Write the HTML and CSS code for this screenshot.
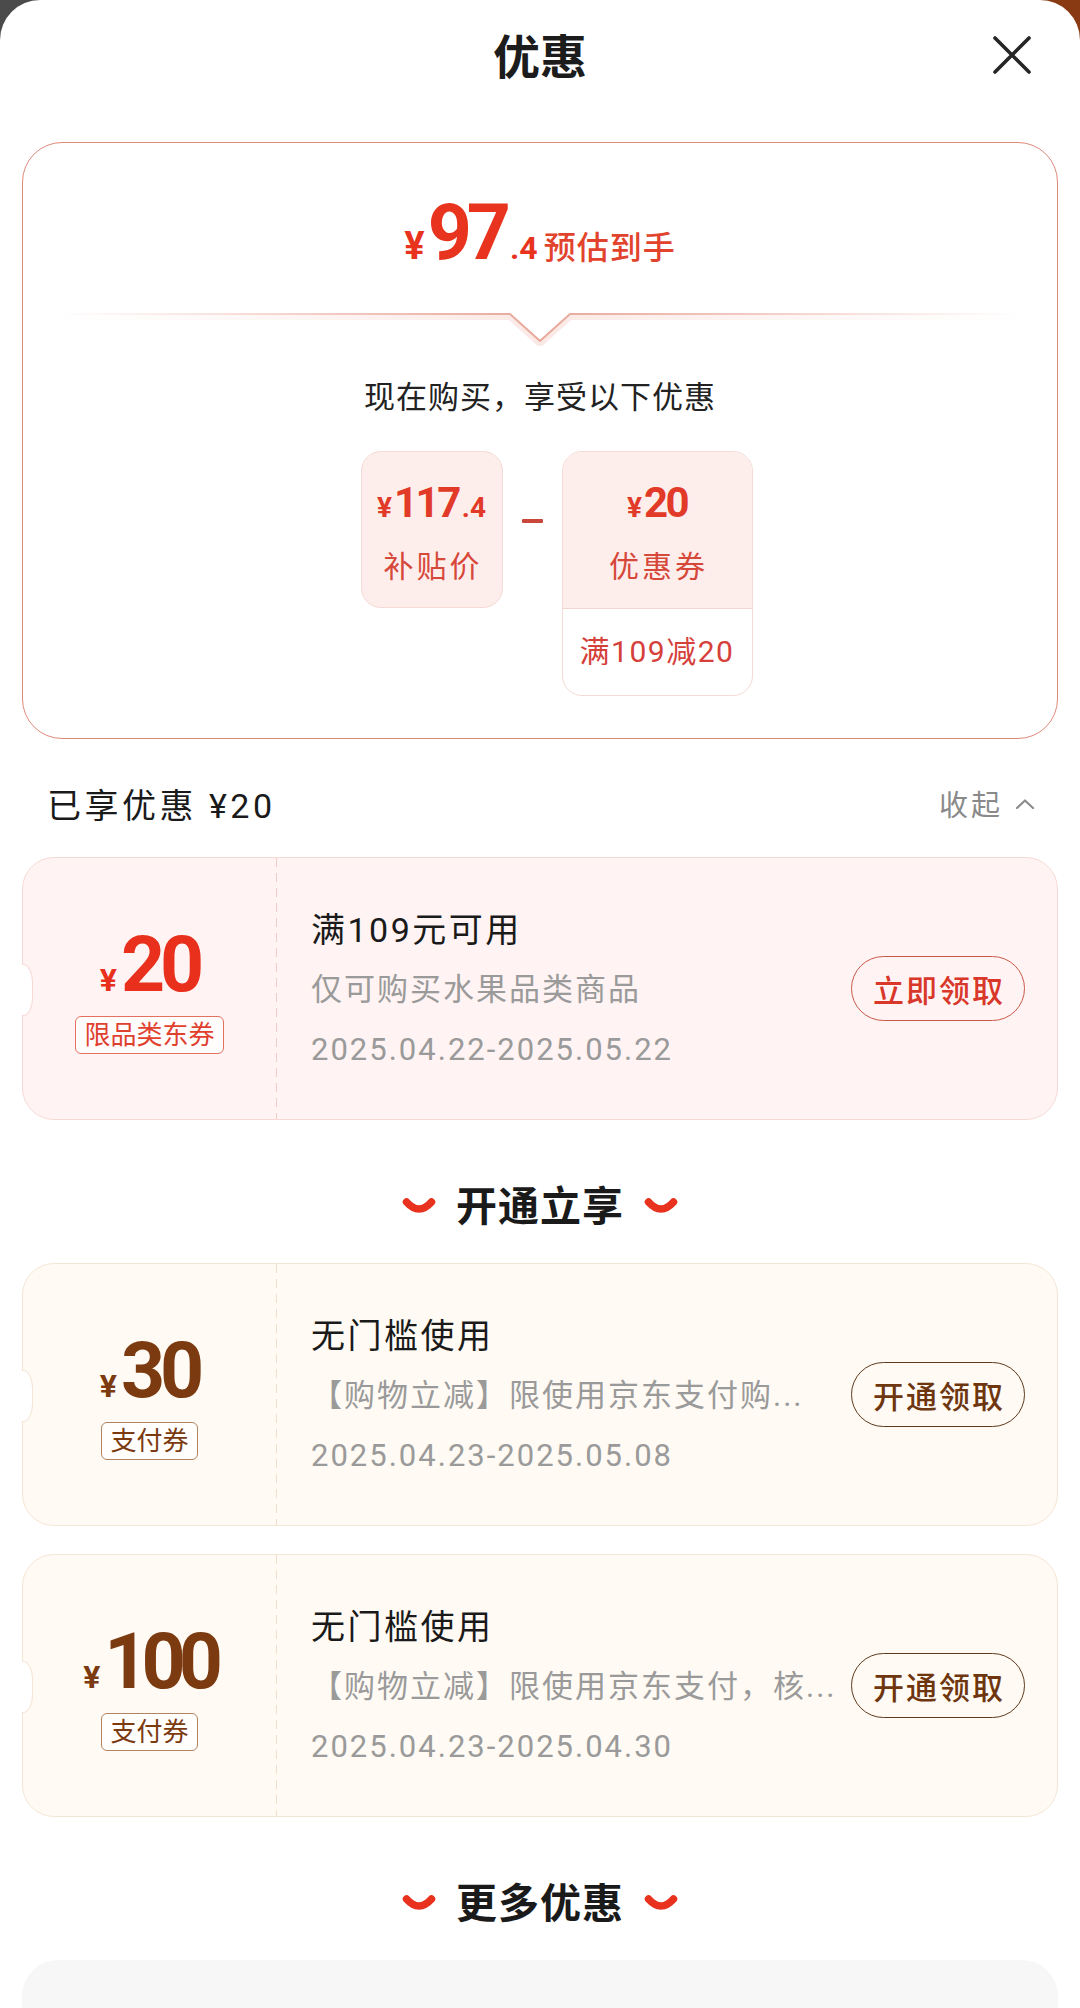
FILE: index.html
```html
<!DOCTYPE html>
<html lang="zh-CN">
<head>
<meta charset="utf-8">
<title>优惠</title>
<link rel="stylesheet" href="styles.css">
</head>
<body>
<div class="sheet">
  <header class="head">
    <span class="head-side"></span>
    <h1 class="title">优惠</h1>
    <button class="close" aria-label="关闭">
      <svg viewBox="0 0 40 40" width="40" height="40"><path d="M3 3 L37 37 M37 3 L3 37" stroke="#262626" stroke-width="3.6" stroke-linecap="round" fill="none"/></svg>
    </button>
  </header>

  <section class="hero">
    <div class="est">
      <span class="est-yen">¥</span><span class="est-int">97</span><span class="est-dec">.4</span><span class="est-lbl">预估到手</span>
    </div>
    <svg class="divider" viewBox="0 0 1034 36" width="1034" height="36">
      <defs>
        <linearGradient id="lg" x1="0" y1="0" x2="1" y2="0">
          <stop offset="0" stop-color="#f6d6d0" stop-opacity="0"/>
          <stop offset="0.3" stop-color="#f1c7bf"/>
          <stop offset="0.5" stop-color="#e8a89b"/>
          <stop offset="0.7" stop-color="#f1c7bf"/>
          <stop offset="1" stop-color="#f6d6d0" stop-opacity="0"/>
        </linearGradient>
        <linearGradient id="lg2" x1="0" y1="0" x2="1" y2="0">
          <stop offset="0" stop-color="#fbeeeb" stop-opacity="0"/>
          <stop offset="0.5" stop-color="#fbe9e5"/>
          <stop offset="1" stop-color="#fbeeeb" stop-opacity="0"/>
        </linearGradient>
      </defs>
      <path d="M32 7 H487 L517 34 L547 7 H1002" stroke="url(#lg2)" stroke-width="6" fill="none"/>
      <path d="M32 4 H487 L517 31 L547 4 H1002" stroke="url(#lg)" stroke-width="2" fill="none" stroke-linejoin="round"/>
    </svg>
    <p class="now">现在购买，享受以下优惠</p>
    <div class="calc">
      <div class="box box-a">
        <div class="bx-amt"><span class="bx-yen">¥</span><span class="bx-int">117</span><span class="bx-dec">.4</span></div>
        <div class="bx-cap">补贴价</div>
      </div>
      <span class="minus"></span>
      <div class="box-b">
        <div class="box-b-top">
          <div class="bx-amt"><span class="bx-yen">¥</span><span class="bx-int">20</span></div>
          <div class="bx-cap">优惠券</div>
        </div>
        <div class="box-b-rule">满109减20</div>
      </div>
    </div>
  </section>

  <div class="enjoyed">
    <span class="enjoyed-txt">已享优惠 ¥20</span>
    <span class="fold">收起<svg class="chev" viewBox="0 0 20 12" width="20" height="12"><path d="M2 10 L10 2.5 L18 10" stroke="#8c8c8c" stroke-width="2.2" fill="none" stroke-linecap="round" stroke-linejoin="round"/></svg></span>
  </div>

  <div class="coupon coupon-red">
    <div class="c-left">
      <div class="c-amt"><span class="c-yen">¥</span><span class="c-num">20</span></div>
      <span class="c-tag">限品类东券</span>
    </div>
    <div class="c-sep"></div>
    <div class="c-body">
      <div class="c-info">
        <div class="c-title">满109元可用</div>
        <div class="c-desc">仅可购买水果品类商品</div>
        <div class="c-date">2025.04.22-2025.05.22</div>
      </div>
      <button class="c-btn">立即领取</button>
    </div>
  </div>

  <h2 class="sec-title">
    <svg class="smile" viewBox="0 0 34 18" width="34" height="18"><path d="M4.5 5 Q17 19 29.5 5" stroke="#e8321e" stroke-width="7.5" fill="none" stroke-linecap="round"/></svg>
    <span>开通立享</span>
    <svg class="smile" viewBox="0 0 34 18" width="34" height="18"><path d="M4.5 5 Q17 19 29.5 5" stroke="#e8321e" stroke-width="7.5" fill="none" stroke-linecap="round"/></svg>
  </h2>

  <div class="coupon coupon-gold">
    <div class="c-left">
      <div class="c-amt"><span class="c-yen">¥</span><span class="c-num">30</span></div>
      <span class="c-tag">支付券</span>
    </div>
    <div class="c-sep"></div>
    <div class="c-body">
      <div class="c-info">
        <div class="c-title">无门槛使用</div>
        <div class="c-desc">【购物立减】限使用京东支付购...</div>
        <div class="c-date">2025.04.23-2025.05.08</div>
      </div>
      <button class="c-btn">开通领取</button>
    </div>
  </div>

  <div class="coupon coupon-gold">
    <div class="c-left">
      <div class="c-amt"><span class="c-yen">¥</span><span class="c-num c-num-wide">100</span></div>
      <span class="c-tag">支付券</span>
    </div>
    <div class="c-sep"></div>
    <div class="c-body">
      <div class="c-info">
        <div class="c-title">无门槛使用</div>
        <div class="c-desc">【购物立减】限使用京东支付，核...</div>
        <div class="c-date">2025.04.23-2025.04.30</div>
      </div>
      <button class="c-btn">开通领取</button>
    </div>
  </div>

  <h2 class="sec-title">
    <svg class="smile" viewBox="0 0 34 18" width="34" height="18"><path d="M4.5 5 Q17 19 29.5 5" stroke="#e8321e" stroke-width="7.5" fill="none" stroke-linecap="round"/></svg>
    <span>更多优惠</span>
    <svg class="smile" viewBox="0 0 34 18" width="34" height="18"><path d="M4.5 5 Q17 19 29.5 5" stroke="#e8321e" stroke-width="7.5" fill="none" stroke-linecap="round"/></svg>
  </h2>

  <div class="more-card"></div>
</div>
</body>
</html>
```

FILE: styles.css
```css
* { box-sizing: border-box; }

html, body {
  margin: 0;
  padding: 0;
}

body {
  width: 1080px;
  height: 2008px;
  overflow: hidden;
  background: linear-gradient(90deg, #4b4b4b 0%, #5a4236 50%, #8a3a12 100%);
  font-family: Roboto, "Noto Sans CJK SC", sans-serif;
  color: #1a1a1a;
}

.sheet {
  background: #ffffff;
  border-radius: 40px 40px 0 0;
  min-height: 2008px;
  overflow: hidden;
}

/* header */
.head {
  display: grid;
  grid-template-columns: 1fr auto 1fr;
  align-items: center;
  height: 116px;
}

.title {
  margin: 0;
  font-size: 47px;
  font-weight: 700;
  line-height: 116px;
  color: #1c1c1c;
}

.close {
  justify-self: end;
  margin: 0 48px 6px 0;
  padding: 0;
  border: 0;
  background: none;
  width: 40px;
  height: 40px;
  display: flex;
}

/* hero card */
.hero {
  margin: 26px 22px 0;
  border: 1px solid #dd8a78;
  border-radius: 40px;
  background: #ffffff;
  padding: 52px 0 42px;
  display: flex;
  flex-direction: column;
  align-items: center;
}

.est {
  display: flex;
  align-items: baseline;
  justify-content: center;
  color: #e8341f;
  height: 77px;
}

.est-yen {
  font-size: 38px;
  font-weight: 700;
  line-height: 1;
  margin-right: 3px;
}

.est-int {
  font-size: 77px;
  font-weight: 700;
  line-height: 1;
  letter-spacing: -5px;
}

.est-dec {
  font-size: 32px;
  font-weight: 700;
  line-height: 1;
  margin-left: 4px;
  margin-right: 6px;
}

.est-lbl {
  font-size: 32px;
  font-weight: 500;
  line-height: 1;
  letter-spacing: 1px;
  color: #e2432d;
}

.divider {
  display: block;
  margin-top: 38px;
}

.now {
  margin: 32px 0 0;
  font-size: 31px;
  line-height: 40px;
  letter-spacing: 1px;
  color: #222;
}

.calc {
  display: flex;
  align-items: flex-start;
  justify-content: center;
  gap: 19px;
  margin-top: 33px;
  padding-left: 33px;
}

.box {
  width: 142px;
  height: 157px;
  background: #fdeeec;
  border: 1px solid #f5dad5;
  border-radius: 20px;
  padding-top: 26px;
  text-align: center;
}

.bx-amt {
  display: flex;
  align-items: baseline;
  justify-content: center;
  height: 50px;
  line-height: 50px;
  color: #e23a28;
  font-weight: 700;
}

.bx-yen {
  font-size: 28px;
  margin-right: 2px;
}

.bx-int {
  font-size: 42px;
  letter-spacing: -2.5px;
}

.bx-dec {
  font-size: 28px;
  margin-left: 3px;
}

.bx-cap {
  margin-top: 19px;
  font-size: 30px;
  line-height: 40px;
  letter-spacing: 3px;
  text-indent: 3px;
  color: #d6483a;
}

.minus {
  width: 21px;
  height: 4px;
  margin-top: 68px;
  background: #c9473a;
  border-radius: 1px;
}

.box-b {
  width: 191px;
  border: 1px solid #f5dad5;
  border-radius: 20px;
  overflow: hidden;
  background: #ffffff;
  text-align: center;
}

.box-b-top {
  height: 157px;
  background: #fdeeec;
  padding-top: 26px;
  border-bottom: 1px solid #f3d6d0;
}

.box-b-rule {
  padding: 23px 0 23px;
  font-size: 30px;
  line-height: 40px;
  letter-spacing: 1.5px;
  color: #d6403a;
}

/* enjoyed row */
.enjoyed {
  display: flex;
  justify-content: space-between;
  align-items: center;
  height: 48px;
  margin: 40px 0 30px;
  padding: 0 45px 0 47px;
}

.enjoyed-txt {
  font-size: 34px;
  letter-spacing: 3.5px;
  color: #1a1a1a;
}

.fold {
  display: flex;
  align-items: center;
  gap: 12px;
  font-size: 29px;
  letter-spacing: 3px;
  color: #8a8a8a;
}

.chev {
  margin-top: 2px;
}

/* coupons */
.coupon {
  position: relative;
  display: flex;
  height: 263px;
  margin: 0 22px;
  border-radius: 32px;
  border: 1px solid;
}

.coupon::before {
  content: "";
  position: absolute;
  left: -1px;
  top: 50%;
  width: 10px;
  height: 50px;
  margin-top: -25px;
  background: #ffffff;
  border: 1px solid;
  border-color: inherit;
  border-left: 0;
  border-radius: 0 10px 10px 0 / 0 18px 18px 0;
}

.coupon-red {
  background: #fff4f3;
  border-color: #f7dad5;
}

.coupon-gold {
  background: #fffaf4;
  border-color: #f4e6d5;
  color: #7b3a0f;
}

.coupon-gold + .coupon-gold {
  margin-top: 28px;
}

.c-left {
  width: 253px;
  flex-shrink: 0;
  display: flex;
  flex-direction: column;
  align-items: center;
  justify-content: center;
  padding-top: 2px;
}

.c-amt {
  display: flex;
  align-items: baseline;
  justify-content: center;
  height: 80px;
  line-height: 80px;
  font-weight: 700;
}

.coupon-red .c-amt { color: #e8301c; }
.coupon-gold .c-amt { color: #7b3a0f; }

.c-yen {
  font-size: 32px;
  margin-right: 4px;
}

.c-num {
  font-size: 77px;
  letter-spacing: -5px;
}

.c-num-wide {
  letter-spacing: -7px;
}

.c-tag {
  margin-top: 11px;
  height: 38px;
  padding: 0 8px;
  border: 1px solid;
  border-radius: 6px;
  font-size: 26px;
  line-height: 36px;
  background: rgba(255, 255, 255, 0.7);
}

.coupon-red .c-tag {
  color: #e0402e;
  border-color: #e5705f;
}

.coupon-gold .c-tag {
  color: #7b3a0f;
  border-color: #b08460;
}

.c-sep {
  width: 1px;
  flex-shrink: 0;
  background: repeating-linear-gradient(to bottom, var(--sep) 0 9px, transparent 9px 15px);
}

.coupon-red .c-sep { --sep: #f1cdc6; }
.coupon-gold .c-sep { --sep: #f0dfca; }

.c-body {
  flex: 1;
  min-width: 0;
  display: flex;
  align-items: center;
  padding: 0 32px 0 34px;
}

.c-info {
  flex: 1;
  min-width: 0;
  margin-right: 12px;
  padding-top: 2px;
}

.c-title {
  font-size: 34px;
  line-height: 60px;
  letter-spacing: 2.5px;
  color: #1a1a1a;
}

.c-desc,
.c-date {
  font-size: 31px;
  line-height: 60px;
  letter-spacing: 2px;
  color: #9a9a9a;
  white-space: nowrap;
  overflow: hidden;
  text-overflow: ellipsis;
}

.c-btn {
  flex-shrink: 0;
  width: 174px;
  height: 65px;
  border-radius: 33px;
  border: 1.5px solid;
  background: transparent;
  font-family: Roboto, "Noto Sans CJK SC", sans-serif;
  font-size: 31px;
  font-weight: 500;
  letter-spacing: 2px;
  text-indent: 2px;
  padding: 0;
}

.coupon-red .c-btn {
  color: #d8372a;
  border-color: #c9584a;
}

.coupon-gold .c-btn {
  color: #6e360f;
  border-color: #5e3a1f;
}

/* section titles */
.sec-title {
  display: flex;
  align-items: center;
  justify-content: center;
  gap: 20px;
  margin: 0;
  padding: 62px 0 31px;
  height: 143px;
  font-size: 41px;
  font-weight: 700;
  line-height: 50px;
  letter-spacing: 1px;
  color: #1a1a1a;
}

.smile {
  display: block;
  margin-top: -2px;
}

.more-card {
  margin: 0 22px;
  height: 120px;
  background: #f7f7f7;
  border-radius: 36px 36px 0 0;
}
```
